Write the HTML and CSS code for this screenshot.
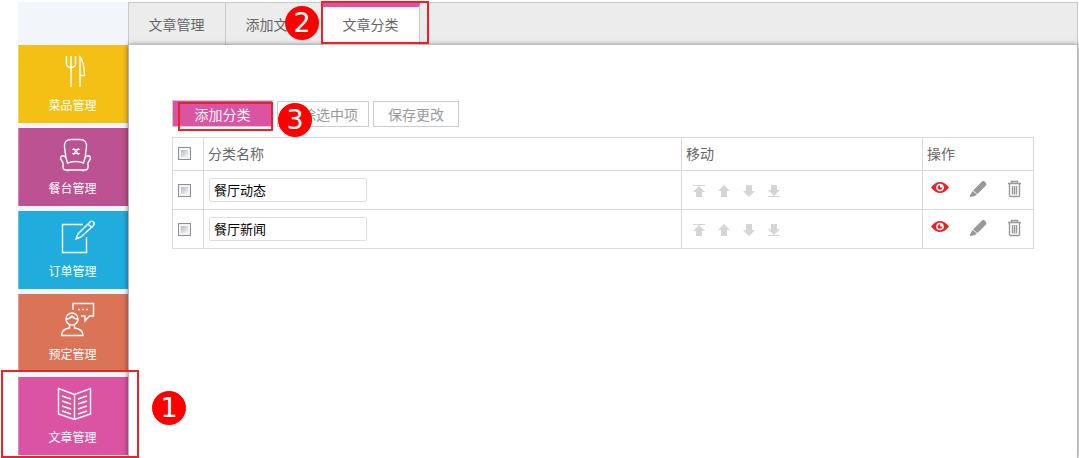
FILE: index.html
```html
<!DOCTYPE html>
<html lang="zh-CN">
<head>
  <meta charset="UTF-8">
  <title>文章分类</title>
  <meta name="viewport" content="width=device-width, initial-scale=1">
  <link rel="stylesheet" href="styles.css">
</head>
<body>
  <!-- shared icons -->
  <svg class="sprite" aria-hidden="true">
    <symbol id="i-up" viewBox="0 0 12 12"><path d="M6 0l6 6H9v6H3V6H0z"/></symbol>
    <symbol id="i-top" viewBox="0 0 12 12"><path d="M0 0h12v1H0zM6 1l6 6H9v5H3V7H0z"/></symbol>
    <symbol id="i-down" viewBox="0 0 12 12"><path d="M3 0h6v6h3l-6 6-6-6h3z"/></symbol>
    <symbol id="i-bottom" viewBox="0 0 12 12"><path d="M3 0h6v5h3l-6 6-6-6h3zM0 11h12v1H0z"/></symbol>
    <symbol id="i-eye" viewBox="0 0 20 18">
      <path d="M1 7.500C4 3.500 7 2 10 2s6 1.500 9 5.500C16 11.500 13 13 10 13S4 11.500 1 7.500z"/>
      <circle cx="10" cy="7.500" r="3.800" fill="#fff"/>
      <circle cx="10" cy="7.500" r="2.300"/>
      <path d="M10 7.500V5h2.500v2.500z" fill="#fff"/>
    </symbol>
    <symbol id="i-pen" viewBox="0 0 20 18">
      <path d="M15 1.500c1.500-1.500 5.500 1.500 4 4L10.500 14 6 10.500zM5.500 11l4.500 3.500-2 1.500-4 1H3v-1.500z"/>
    </symbol>
    <symbol id="i-trash" viewBox="0 0 20 18">
      <path d="M7.500 3V1.500h6V3M4 3.500h13M5.500 4v11.500q0 1 1 1h8q1 0 1-1V4M8.500 6v8.500M10.500 6v8.500M12.500 6v8.500" fill="none" stroke="currentColor" stroke-width="1.400"/>
    </symbol>
  </svg>

  <div class="page">
    <nav class="sidebar">
      <a class="menu yellow" href="#">
        <svg viewBox="0 0 40 36"><path d="M13.500 2v8q0 3 4.500 3.500Q22.500 13 22.500 10V2M18 2v31M27 33V3q4 4 4.500 18.500H27"/></svg>
        <span>菜品管理</span>
      </a>
      <a class="menu purple" href="#">
        <svg viewBox="0 0 40 36">
          <path d="M13 21L11.500 10Q11 2.500 18 2.500h9q7 0 6.500 7.500L32 21M14.500 26L13 21c-1-3-5-3-5.500 0 0 2 2 3 2.500 5v4q0 3 3 3h19q3 0 3-3v-4c.5-2 2.500-3 2.500-5-.5-3-4.500-3-5.500 0l-1.500 5q-8-3-16 0zM15 33v1.500M30 33v1.500"/>
          <path d="M19 12.500h8M19 16.500h8M20.500 11l2 3.500-2 3.500M25.500 11l-2 3.500 2 3.500" stroke-width="1.200"/>
        </svg>
        <span>餐台管理</span>
      </a>
      <a class="menu blue" href="#">
        <svg viewBox="0 0 40 36"><path d="M30 4.500H9.500v28h24V17M23 19l2-5L37 2q2-1.500 3.500 0t0 3.500L28 17zM35 4l3.500 3.500"/></svg>
        <span>订单管理</span>
      </a>
      <a class="menu orange" href="#">
        <svg viewBox="0 0 40 36">
          <path d="M20 7V.5h20.500v12.500h-4l-4.500 5v-5h-4M25 6.500h2M29 6.500h2M33 6.500h2"/>
          <circle cx="19" cy="16" r="6"/>
          <path d="M13 16q4 0 6-3 2 3 6 3M16.500 22v3Q8.500 26 8.500 32.500h21.500Q30 26 21.500 25v-3"/>
        </svg>
        <span>预定管理</span>
      </a>
      <a class="menu pink" href="#">
        <svg viewBox="0 0 40 36"><path d="M21.500 8.500L5.500 2.500V28l16 5.500 16-5.500V2.500zM21.500 8.500v25"/><path d="M9 10l9 3M9 15l9 3M9 20l9 3M9 25l9 3M34 10l-9 3M34 15l-9 3M34 20l-9 3M34 25l-9 3" stroke-width="1.800"/></svg>
        <span>文章管理</span>
      </a>
    </nav>

    <main class="main">
      <div class="tabs">
        <a href="#">文章管理</a>
        <a href="#">添加文章</a>
        <a class="active" href="#">文章分类</a>
      </div>

      <div class="content">
        <div class="toolbar">
          <button class="btn primary" type="button">添加分类</button>
          <button class="btn" type="button">删除选中项</button>
          <button class="btn" type="button">保存更改</button>
        </div>

        <table class="list">
          <thead>
            <tr>
              <th class="col-check"><input type="checkbox" aria-label="全选"></th>
              <th>分类名称</th>
              <th class="col-move">移动</th>
              <th class="col-ops">操作</th>
            </tr>
          </thead>
          <tbody>
            <tr>
              <td><input type="checkbox" aria-label="选择餐厅动态"></td>
              <td><input class="name" type="text" value="餐厅动态" aria-label="分类名称"></td>
              <td>
                <div class="move">
                  <button type="button" aria-label="置顶"><svg><use href="#i-top"/></svg></button>
                  <button type="button" aria-label="上移"><svg><use href="#i-up"/></svg></button>
                  <button type="button" aria-label="下移"><svg><use href="#i-down"/></svg></button>
                  <button type="button" aria-label="置底"><svg><use href="#i-bottom"/></svg></button>
                </div>
              </td>
              <td>
                <div class="ops">
                  <button class="show" type="button" aria-label="显示"><svg><use href="#i-eye"/></svg></button>
                  <button type="button" aria-label="编辑"><svg><use href="#i-pen"/></svg></button>
                  <button type="button" aria-label="删除"><svg><use href="#i-trash"/></svg></button>
                </div>
              </td>
            </tr>
            <tr>
              <td><input type="checkbox" aria-label="选择餐厅新闻"></td>
              <td><input class="name" type="text" value="餐厅新闻" aria-label="分类名称"></td>
              <td>
                <div class="move">
                  <button type="button" aria-label="置顶"><svg><use href="#i-top"/></svg></button>
                  <button type="button" aria-label="上移"><svg><use href="#i-up"/></svg></button>
                  <button type="button" aria-label="下移"><svg><use href="#i-down"/></svg></button>
                  <button type="button" aria-label="置底"><svg><use href="#i-bottom"/></svg></button>
                </div>
              </td>
              <td>
                <div class="ops">
                  <button class="show" type="button" aria-label="显示"><svg><use href="#i-eye"/></svg></button>
                  <button type="button" aria-label="编辑"><svg><use href="#i-pen"/></svg></button>
                  <button type="button" aria-label="删除"><svg><use href="#i-trash"/></svg></button>
                </div>
              </td>
            </tr>
          </tbody>
        </table>
      </div>
    </main>

    <!-- step marks -->
    <div class="frame frame-menu"></div>
    <div class="frame frame-tab"></div>
    <div class="frame frame-add"></div>
    <span class="step step-1">1</span>
    <span class="step step-2">2</span>
    <span class="step step-3">3</span>
  </div>
</body>
</html>
```

FILE: styles.css
```css
* {
  box-sizing: border-box;
}

body {
  margin: 0;
  background: #fff;
  color: #666;
  font-family: "Noto Sans CJK SC", sans-serif;
  font-size: 14px;
  line-height: 20px;
}

a {
  color: inherit;
  text-decoration: none;
}

button {
  font: inherit;
  cursor: pointer;
}

.sprite {
  display: none;
}

.page {
  position: relative;
  display: flex;
  min-height: 100vh;
  padding: 2px 1px 0 18px;
}

/* sidebar */
.sidebar {
  width: 110px;
  flex: none;
  display: flex;
  flex-direction: column;
  gap: 5px;
  padding: 43px 0 2px;
  background: #f2f6fa;
}

.menu {
  height: 78px;
  padding: 9px 2px 0 0;
  display: flex;
  flex-direction: column;
  align-items: center;
  gap: 5px;
  border-left: 1px solid rgba(255, 255, 255, 0.3);
  color: #fff;
  font-size: 12px;
}

.menu svg {
  width: 40px;
  height: 36px;
  overflow: visible;
  fill: none;
  stroke: #fff;
  stroke-width: 1.4;
}

.yellow { background: #f4c016; }
.purple { background: #bc5291; }
.blue { background: #20acdd; }
.orange { background: #db7356; }
.pink { background: #db54a3; }

/* tabs */
.main {
  flex: 1;
  display: flex;
  flex-direction: column;
}

.tabs {
  display: flex;
  height: 43px;
  background: #ececec;
  border: 1px solid #c8c8c8;
  border-bottom: 0;
}

.tabs a {
  width: 97px;
  padding: 11px 1px 0 0;
  border-right: 1px solid #c8c8c8;
  text-align: center;
}

.tabs .active {
  padding-top: 7px;
  border-top: 4px solid #db54a3;
  background: #fff;
}

/* content */
.content {
  flex: 1;
  position: relative;
  padding: 55px 43px 0;
  background: #fff;
  border: 1px solid #b4b4b4;
  border-width: 0 1px;
  box-shadow: 0 0 5px rgba(0, 0, 0, 0.5);
}

.toolbar {
  display: flex;
  align-items: center;
  gap: 4px;
  margin-bottom: 10px;
}

.btn {
  height: 26px;
  padding: 0 10px;
  background: #fff;
  border: 1px solid #ccc;
  color: #999;
  line-height: 22px;
}

.btn + .btn {
  min-width: 86px;
}

.btn.primary {
  width: 101px;
  height: 27px;
  background: #db54a3;
  color: #fff;
}

.list {
  width: 100%;
  border-collapse: collapse;
  table-layout: fixed;
}

.list th,
.list td {
  height: 39px;
  padding: 0 5px;
  border: 1px solid #d9d9d9;
  font-weight: normal;
  text-align: left;
}

.list th {
  height: 33px;
  padding: 0 4px 2px;
}

.col-check { width: 31px; }
.col-move { width: 241px; }
.col-ops { width: 111px; }

input[type="checkbox"] {
  appearance: none;
  display: block;
  width: 13px;
  height: 13px;
  margin: 0;
  border: 1px solid #8e8f8f;
  background: linear-gradient(135deg, #b6bcc6, #f4f4f4) content-box, #f4f4f4;
  padding: 2px;
}

.list .col-check {
  padding-left: 5px;
}

.name {
  display: block;
  width: 158px;
  height: 24px;
  padding: 0 4px 2px;
  border: 1px solid #ddd;
  border-radius: 2px;
  color: #000;
  font: 13px "Noto Sans CJK SC", sans-serif;
}

.move,
.ops {
  display: flex;
}

.move {
  gap: 13px;
  padding: 1px 0 0 6px;
}

.ops {
  gap: 17px;
  padding: 0 0 3px 2px;
}

.move button,
.ops button {
  padding: 0;
  border: 0;
  background: none;
  color: #999;
}

.move svg,
.ops svg {
  display: block;
  width: 20px;
  height: 18px;
  fill: currentColor;
}

.move svg {
  width: 12px;
  height: 12px;
  color: #d5d5d5;
}

.ops .show {
  color: #e8232a;
}

/* step marks */
.frame,
.step {
  position: absolute;
}

.frame {
  border: 2px solid #e8232a;
}

.frame-menu { left: 1px; top: 370px; width: 138px; height: 88px; }
.frame-tab { left: 321px; top: 1px; width: 108px; height: 43px; }
.frame-add { left: 178px; top: 102px; width: 95px; height: 29px; }

.step {
  width: 34px;
  height: 34px;
  border-radius: 50%;
  background: #f00;
  color: #fff;
  font: 27px/34px "DejaVu Sans", sans-serif;
  text-align: center;
}

.step-1 { left: 152px; top: 391px; }
.step-2 { left: 285px; top: 6px; }
.step-3 { left: 278px; top: 103px; }
```
